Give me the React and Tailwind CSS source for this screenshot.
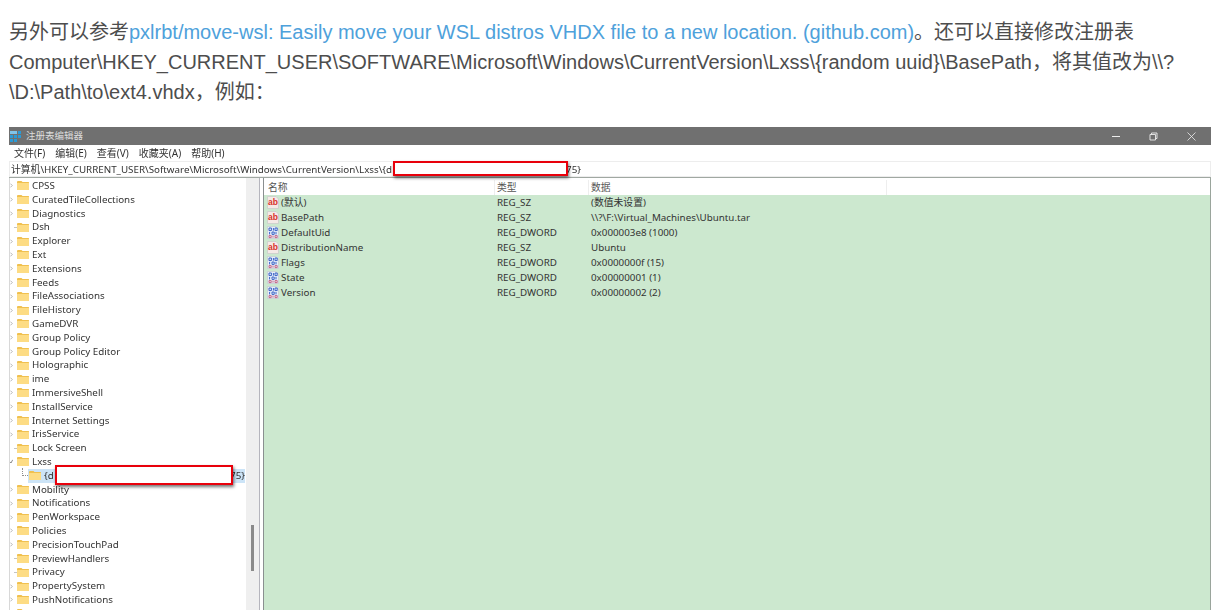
const treeItems = [
  ['CPSS', 'arrow'], ['CuratedTileCollections', 'arrow'], ['Diagnostics', 'arrow'], ['Dsh', 'dash'], ['Explorer', 'arrow'],
  ['Ext', 'arrow'], ['Extensions', 'arrow'], ['Feeds', 'arrow'], ['FileAssociations', 'arrow'], ['FileHistory', 'arrow'],
  ['GameDVR', 'arrow'], ['Group Policy', 'arrow'], ['Group Policy Editor', 'arrow'], ['Holographic', 'arrow'], ['ime', 'arrow'],
  ['ImmersiveShell', 'arrow'], ['InstallService', 'arrow'], ['Internet Settings', 'arrow'], ['IrisService', 'arrow'],
  ['Lock Screen', 'dash'], ['Lxss', 'open'], ['{d', 'child'], ['Mobility', 'arrow'], ['Notifications', 'arrow'],
  ['PenWorkspace', 'arrow'], ['Policies', 'arrow'], ['PrecisionTouchPad', 'arrow'], ['PreviewHandlers', 'dash'], ['Privacy', 'dash'],
  ['PropertySystem', 'arrow'], ['PushNotifications', 'arrow'], ['SASAS', 'arrow'],
];

const values = [
  ['(默认)', 'REG_SZ', '(数值未设置)', 'ab'],
  ['BasePath', 'REG_SZ', '\\\\?\\F:\\Virtual_Machines\\Ubuntu.tar', 'ab'],
  ['DefaultUid', 'REG_DWORD', '0x000003e8 (1000)', 'bin'],
  ['DistributionName', 'REG_SZ', 'Ubuntu', 'ab'],
  ['Flags', 'REG_DWORD', '0x0000000f (15)', 'bin'],
  ['State', 'REG_DWORD', '0x00000001 (1)', 'bin'],
  ['Version', 'REG_DWORD', '0x00000002 (2)', 'bin'],
];

function Folder() {
  return (
    <svg viewBox="0 0 12 9" className="w-[12px] h-[9px] shrink-0">
      <path d="M0 1 Q0 0 1 0 H4.5 L5.5 1 H11.5 Q12 1 12 1.5 V8.5 Q12 9 11.5 9 H0.5 Q0 9 0 8.5 Z" fill="#f0c04f" />
      <path d="M0 2 H12 V8.5 Q12 9 11.5 9 H0.5 Q0 9 0 8.5 Z" fill="#fddc84" />
    </svg>
  );
}

function Expander({ kind }) {
  if (kind === 'arrow') {
    return (
      <svg viewBox="0 0 4 6" className="w-[3px] h-[5px] shrink-0 mr-[4px]">
        <path d="M0.5 0.5 L3 3 L0.5 5.5" fill="none" stroke="#8f8f8f" strokeWidth="0.9" />
      </svg>
    );
  }
  if (kind === 'dash') {
    return <span className="w-[3px] h-px bg-[#c4c4c4] shrink-0 ml-[4px]" />;
  }
  return (
    <svg viewBox="0 0 4 6" className="w-[3px] h-[5px] shrink-0 mr-[4px]">
      <path d="M0.3 3.5 L1.3 5 L3.6 0.8" fill="none" stroke="#555555" strokeWidth="0.9" />
    </svg>
  );
}

function ValueIcon({ type }) {
  if (type === 'ab') {
    return (
      <svg viewBox="0 0 12 13" className="w-[12px] h-[13px] shrink-0">
        <path d="M0.5 0.5 H9 L11.5 3 V12.5 H0.5 Z" fill="#f4e9e6" stroke="#c9c9c9" strokeWidth="0.7" />
        <text x="6" y="8.6" textAnchor="middle" fontSize="8.5" fontWeight="700" fill="#d8322a" fontFamily="Liberation Sans, sans-serif">ab</text>
      </svg>
    );
  }
  return (
    <svg viewBox="0 0 12 13" className="w-[12px] h-[13px] shrink-0">
      <path d="M0.5 0.5 H9 L11.5 3 V12.5 H0.5 Z" fill="#e6eefa" stroke="#c4c8d0" strokeWidth="0.7" />
      <path d="M2 2 h2.4 v2.6 h-2.4 z M6.4 2 v2.6 M8 2 h2.2 v2.6 h-2.2 z" fill="none" stroke="#2a55c0" strokeWidth="0.9" />
      <path d="M2.6 6 v2.4 M5 6 h2.2 v2.4 h-2.2 z M9 6 v2.4" fill="none" stroke="#2a55c0" strokeWidth="0.9" />
      <path d="M2 9.6 h2.2 v2 h-2.2 z M6 9.6 v2 M8 9.6 h2.2 v2 h-2.2 z" fill="none" stroke="#c04a6a" strokeWidth="0.8" />
    </svg>
  );
}

function Redaction({ className }) {
  return <div className={`absolute bg-white border-2 border-[#e8000b] shadow-[1px_2px_3px_rgba(0,0,0,0.55)] ${className}`} />;
}

export default function App() {
  return (
    <div className="h-screen overflow-hidden bg-white flex flex-col font-['Liberation_Sans','Noto_Sans_CJK_SC',sans-serif]">
      <p className="mt-[17px] mx-[9px] text-[20px] leading-[30px] text-[#4d4d4d] whitespace-nowrap">
        另外可以参考<a className="text-[#4ea1db]">pxlrbt/move-wsl: Easily move your WSL distros VHDX file to a new location. (github.com)</a>。还可以直接修改注册表<br />
        Computer\HKEY_CURRENT_USER\SOFTWARE\Microsoft\Windows\CurrentVersion\Lxss\{'{'}random uuid{'}'}\BasePath，将其值改为\\?<br />
        \D:\Path\to\ext4.vhdx，例如：
      </p>

      <div className="relative mt-[20px] mx-[9px] w-[1202px] flex-1 min-h-0 flex flex-col text-[9.8px] text-[#333333] blur-[0.3px] font-['Noto_Sans','Noto_Sans_CJK_SC',sans-serif]">
        <div className="h-[18px] bg-[#707070] flex items-center shrink-0 text-[#dcdcdc]">
          <svg viewBox="0 0 11 11" className="w-[11px] h-[11px] ml-[1px] shrink-0">
            <path d="M0 0 h7 v3 h-7 z" fill="#7fc4ea" />
            <path d="M8 0 h3 v3 h-3 z M0 4 h3 v3 h-3 z M4 4 h3 v3 h-3 z M8 4 h3 v3 h-3 z M0 8 h3 v3 h-3 z M4 8 h3 v3 h-3 z" fill="#2a9ad6" />
          </svg>
          <span className="ml-[5px] text-[9.5px] leading-none">注册表编辑器</span>
          <div className="ml-auto flex items-center">
            <span className="w-[8px] h-px bg-[#ececec] mr-[29px]" />
            <svg viewBox="0 0 9 9" className="w-[9px] h-[9px] mr-[29px]">
              <path d="M2.5 2.5 V1 H8 V6.5 H6.5 M1 2.5 H6.5 V8 H1 Z" fill="none" stroke="#ececec" strokeWidth="0.9" />
            </svg>
            <svg viewBox="0 0 9 9" className="w-[9px] h-[9px] mr-[15px]">
              <path d="M0.5 0.5 L8.5 8.5 M8.5 0.5 L0.5 8.5" stroke="#ececec" strokeWidth="0.8" />
            </svg>
          </div>
        </div>

        <div className="h-[16px] flex items-center gap-[10px] pl-[5px] shrink-0 leading-none text-[10px]">
          <span>文件(F)</span><span>编辑(E)</span><span>查看(V)</span><span>收藏夹(A)</span><span>帮助(H)</span>
        </div>

        <div className="h-[16px] flex items-center pl-[1px] pt-[2px] shrink-0 border border-[#ededed] whitespace-nowrap leading-none">
          计算机\HKEY_CURRENT_USER\Software\Microsoft\Windows\CurrentVersion\Lxss\{'{'}d<span className="ml-[174px]">75{'}'}</span>
        </div>

        <div className="flex flex-1 min-h-0 border-t border-[#a0a8a2]">
          <div className="w-[251px] shrink-0 flex overflow-hidden border-l border-r border-l-[#d8d8d8] border-r-[#b5b5bd] mr-[3px]">
            <div className="flex-1 min-w-0 pt-px">
              {treeItems.map(([name, kind]) => (
                <div key={name} className="h-[13.8px] flex items-center whitespace-nowrap leading-none">
                  {kind === 'child' ? (
                    <>
                      <span className="ml-[12px] w-[6px] h-[8px] mb-[8px] border-l border-b border-dotted border-[#8f8f8f] shrink-0" />
                      <div className="flex items-center bg-[#cce4f7] w-[217px] h-[13.8px] pl-[1px]">
                        <Folder />
                        <span className="ml-[3px]">{name}</span>
                        <span className="ml-auto">75{'}'}</span>
                      </div>
                    </>
                  ) : (
                    <>
                      <Expander kind={kind} />
                      <Folder />
                      <span className="ml-[3px]">{name}</span>
                    </>
                  )}
                </div>
              ))}
            </div>
            <div className="w-[13px] shrink-0 bg-[#efefef] flex flex-col">
              <div className="mt-[347px] ml-[5px] w-[3px] h-[46px] bg-[#8a8a8a]" />
            </div>
          </div>

          <div className="flex-1 min-w-0 flex flex-col bg-[#cce8cf] border-l border-[#8a8f90] border-r border-r-[#9aa59c]">
            <div className="h-[17px] pt-[2px] bg-white shrink-0 flex items-center text-[#555555] leading-none">
              <span className="w-[231px] pl-[4px] h-full flex items-center border-r border-[#eeeeee]">名称</span>
              <span className="w-[94px] pl-[2px] h-full flex items-center border-r border-[#eeeeee]">类型</span>
              <span className="w-[298px] pl-[2px] h-full flex items-center border-r border-[#eeeeee]">数据</span>
            </div>
            <div>
              {values.map(([name, type, data, icon]) => (
                <div key={name} className="h-[15px] flex items-center whitespace-nowrap leading-none">
                  <div className="w-[231px] pl-[3px] flex items-center gap-[2px]">
                    <ValueIcon type={icon} />
                    <span>{name}</span>
                  </div>
                  <span className="w-[94px] pl-[2px]">{type}</span>
                  <span className="pl-[2px]">{data}</span>
                </div>
              ))}
            </div>
          </div>
        </div>

        <Redaction className="left-[384px] top-[34px] w-[175px] h-[15px]" />
        <Redaction className="left-[46px] top-[338px] w-[178px] h-[20px]" />
      </div>
    </div>
  );
}
